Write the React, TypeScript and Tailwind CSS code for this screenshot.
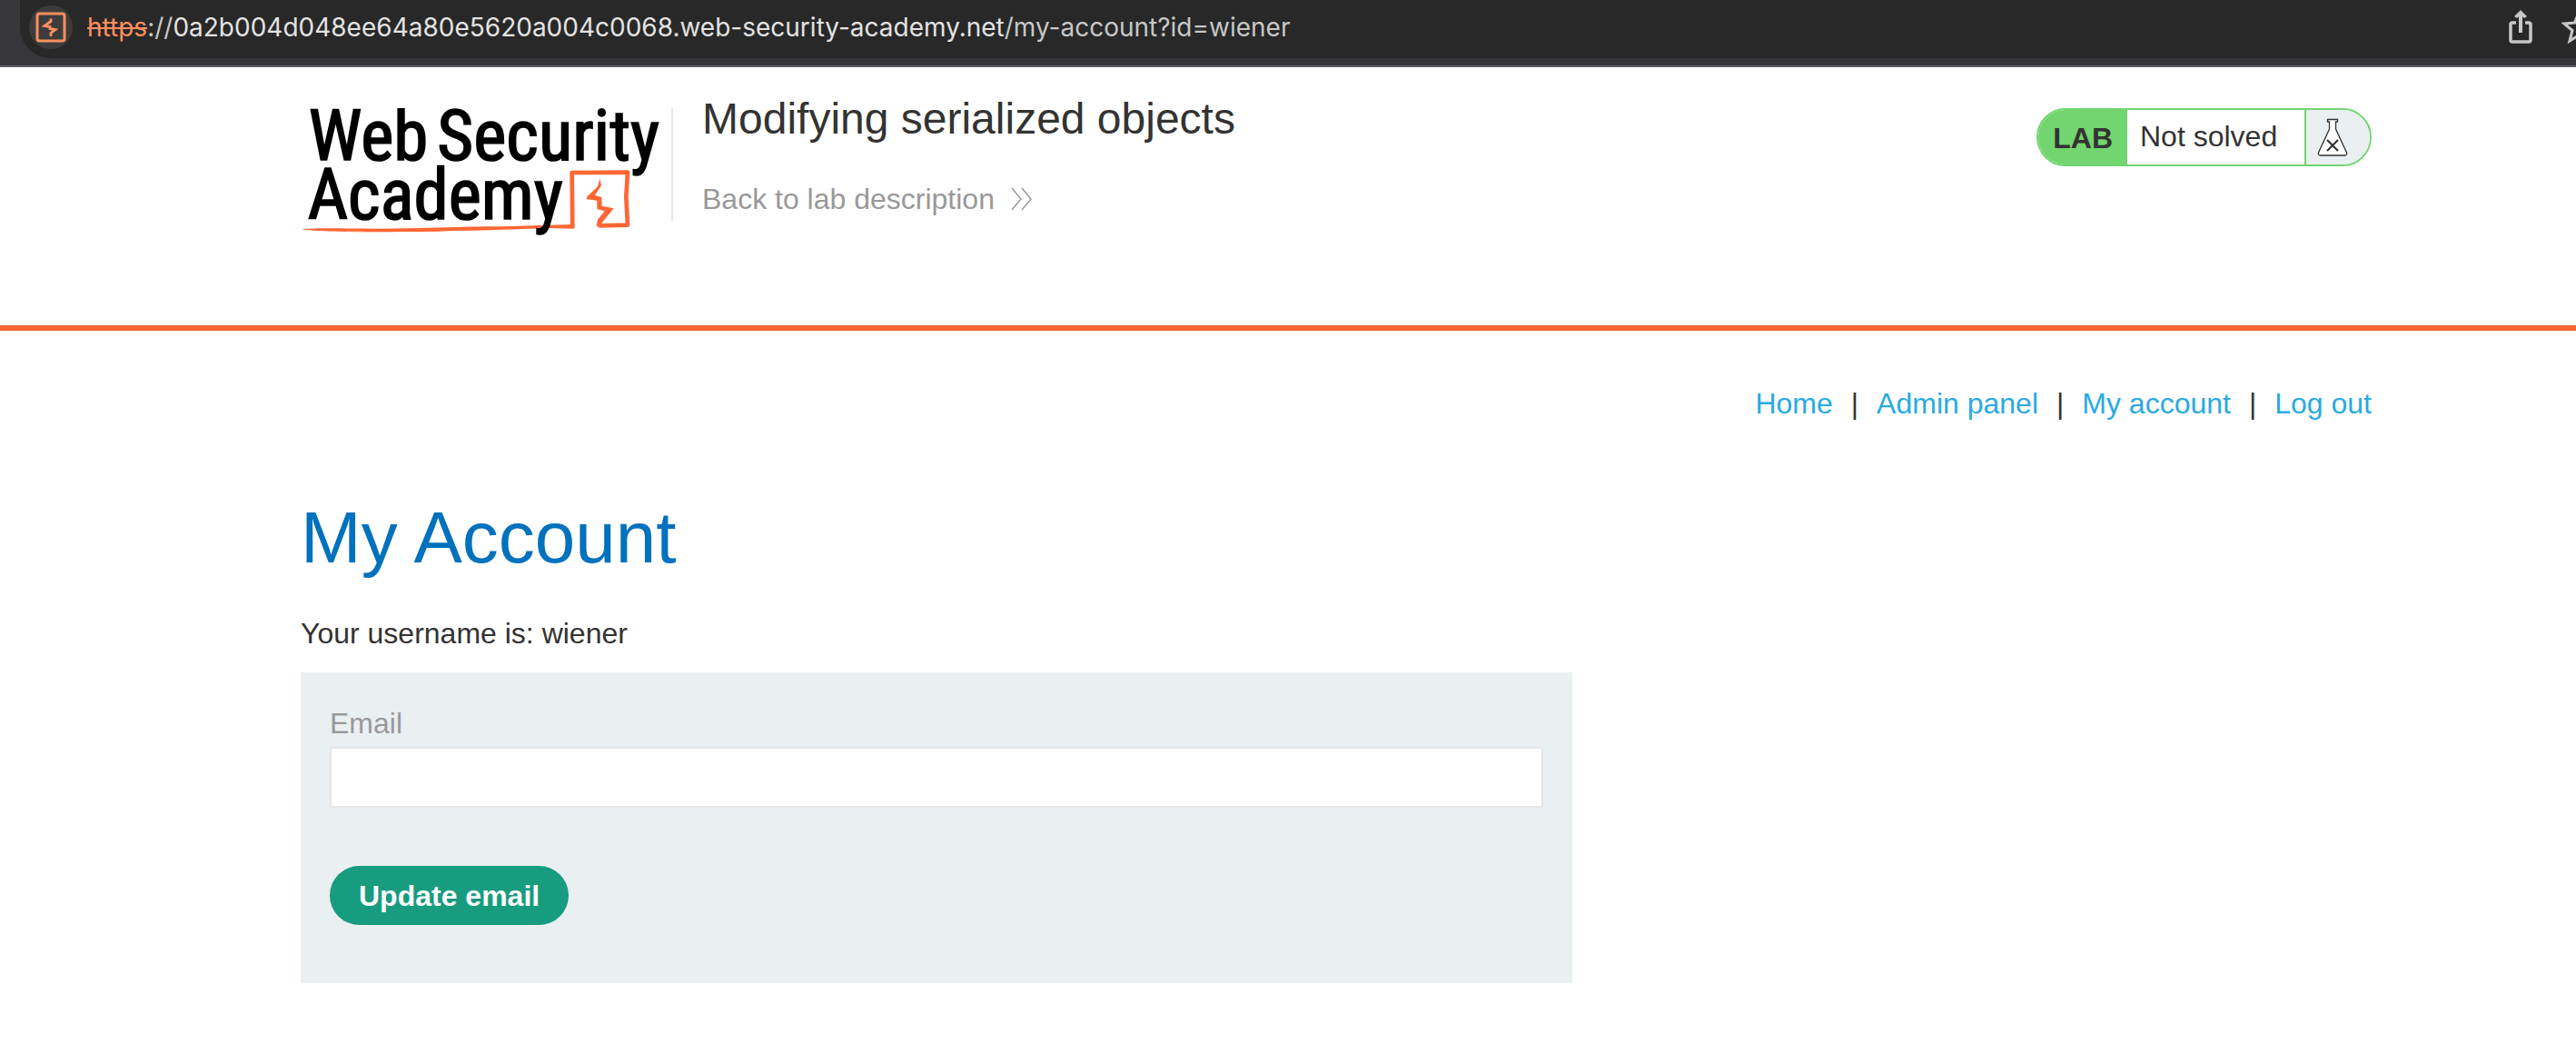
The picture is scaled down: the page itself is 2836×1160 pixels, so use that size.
import React from "react";

const NAV_LINKS = ["Home", "Admin panel", "My account", "Log out"];

function SiteIcon() {
  return (
    <svg viewBox="0 0 34 34" className="size-[34px]" fill="none" aria-hidden="true">
      <rect x="2" y="2" width="30" height="30" rx="2.500" stroke="#ff8f5f" strokeWidth="3" />
      <path d="M17 7.500 V10.500 L10 15.500 L16 16.500 V18.500 L22 19.500 L17 23.500 V27" stroke="#ff8f5f" strokeWidth="2.800" />
    </svg>
  );
}

function ShareIcon() {
  return (
    <svg viewBox="0 0 26 38" className="h-[38px] w-[26px]" fill="none" stroke="#c7c7c7" strokeWidth="3.500" aria-hidden="true">
      <path d="M8 14 H4 Q2 14 2 16 V33 Q2 35 4 35 H22 Q24 35 24 33 V16 Q24 14 22 14 H18" />
      <path d="M13 25 V4" strokeWidth="4" />
      <path d="M13 0 L20 7 L17 9 L13 5.500 L9 9 L6 7 Z" fill="#c7c7c7" stroke="none" />
    </svg>
  );
}

function StarIcon() {
  return (
    <svg viewBox="0 0 38 38" className="size-[38px]" fill="none" stroke="#c7c7c7" strokeWidth="3" aria-hidden="true">
      <path d="M19 3 L23.500 14 L35 15 L26 22.500 L29 34 L19 28 L9 34 L12 22.500 L3 15 L14.500 14 Z" />
    </svg>
  );
}

function AddressBar() {
  return (
    <div className="overflow-hidden border-b-2 border-[#616066] bg-[#37363b] pb-2 pl-[22px]">
      <div className="flex h-16 items-center rounded-bl-[34px] bg-[#282828] pb-1 pl-[10px]">
        <button type="button" aria-label="Site information" className="flex size-12 shrink-0 items-center justify-center rounded-full bg-[#3c3c3c]">
          <SiteIcon />
        </button>
        <p className="ml-4 grow whitespace-nowrap font-['Inter',sans-serif] text-[28px] leading-10 text-[#c7c7c7]">
          <span className="text-[#ff8f5f] line-through decoration-2">https</span>
          <span>://</span>
          <span className="text-[#e3e3e3]">0a2b004d048ee64a80e5620a004c0068.web-security-academy.net</span>
          <span>/my-account?id=wiener</span>
        </p>
        <div className="-mr-[22px] flex shrink-0 items-center gap-8">
          <button type="button" aria-label="Share">
            <ShareIcon />
          </button>
          <button type="button" aria-label="Bookmark this page">
            <StarIcon />
          </button>
        </div>
      </div>
    </div>
  );
}

function Logo() {
  return (
    <svg viewBox="33 57 1200 420" className="h-[140px] w-[400px] shrink-0" role="img" aria-label="Web Security Academy">
      <g fill="none" stroke="#ff6633" strokeWidth="14" strokeLinejoin="round">
        <path d="M36 457 C90 451 180 455 300 455 C500 452 600 447 700 448 L930 441 L937 455 L850 453 C700 460 600 460 490 464 C300 466 100 468 36 457 Z" fill="#ff6633" stroke="none" />
        <path d="M931 452 L929 270 L1113 269 L1108 350 L1113 443 L1018 445" />
        <path d="M1021 290 L1026 312 L1005 345 L1027 351 L1028 380 L1067 388 L1028 436 L1020 450 L1010 446 L1014 425 L1037 397 L1012 390 L1012 362 L978 358 L978 350 L1014 316 Z" fill="#ff6633" stroke="none" />
      </g>
      <g fontFamily="'Roboto Condensed', sans-serif" fontSize="231" fontWeight="400" fill="#000" stroke="#000" strokeWidth="5">
        <text x="59" y="229">Web</text>
        <text x="484" y="229">Security</text>
        <text x="56" y="424">Academy</text>
      </g>
    </svg>
  );
}

function DoubleChevron() {
  return (
    <svg viewBox="0 0 24 26" className="h-[26px] w-6" fill="none" stroke="#999" strokeWidth="1.500" aria-hidden="true">
      <path d="M1 1 L11 13 L1 25 M12 1 L22 13 L12 25" />
    </svg>
  );
}

function Flask() {
  return (
    <svg viewBox="0 0 34 42" className="h-[42px] w-[34px]" stroke="#333332" aria-hidden="true">
      <path d="M11.500 1.500 H22.500 V4 H20.500 V12 L32.500 38 Q33 41 30.500 41 H3.500 Q1 41 1.500 38 L13.500 12 V4 H11.500 Z" fill="#fff" strokeWidth="1.300" />
      <path d="M11 24 L23 36 M23 24 L11 36" strokeWidth="2.200" fill="none" />
    </svg>
  );
}

function LabStatus() {
  return (
    <div className="flex h-16 shrink-0 items-stretch overflow-hidden rounded-full border-2 border-[#72d56f] bg-white text-[32px] leading-[60px]">
      <strong className="bg-[#72d56f] pl-4 pr-4 leading-[62px]">LAB</strong>
      <p className="w-[195px] pl-[14px] leading-[58px]">Not solved</p>
      <span className="flex w-[72px] items-center border-l-2 border-[#72d56f] bg-[#eaeff2] pl-3">
        <Flask />
      </span>
    </div>
  );
}

export default function App() {
  return (
    <div className="font-['Liberation_Sans',Arial,sans-serif] text-[32px] leading-10 text-[#333332]">
      <AddressBar />

      <header className="border-b-[6px] border-[#ff6633]">
        <div className="ml-[331px] mr-[225px] flex h-[284px] items-start pt-[45px]">
          <a href="#academy">
            <Logo />
          </a>
          <div className="ml-2 h-[124px] w-0.5 shrink-0 bg-[#e5e5e5]" />
          <div className="-mt-4 ml-8 grow">
            <h2 className="text-[48px] leading-[56px]">Modifying serialized objects</h2>
            <a href="#lab" className="mt-10 flex items-center gap-[18px] text-[#999]">
              Back to lab description
              <DoubleChevron />
            </a>
          </div>
          <LabStatus />
        </div>
      </header>

      <main className="ml-[331px] mr-[225px]">
        <nav className="flex justify-end pt-[60px]">
          {NAV_LINKS.map((label, i) => (
            <React.Fragment key={label}>
              {i > 0 && <span className="mx-5">|</span>}
              <a href={"#" + label.toLowerCase().replace(" ", "-")} className="text-[#29aae1]">
                {label}
              </a>
            </React.Fragment>
          ))}
        </nav>

        <h1 className="mt-[82px] text-[80px] leading-[92px] text-[#0071bd]">My Account</h1>
        <p className="mt-[39px]">Your username is: wiener</p>

        <form className="mt-[23px] max-w-[1400px] bg-[#eaeff2] px-8 pb-16 pt-9" onSubmit={(e) => e.preventDefault()}>
          <label htmlFor="email" className="block text-[#999]">
            Email
          </label>
          <input
            id="email"
            type="email"
            className="mt-1.5 block h-[67px] w-full border-2 border-[#e5e5e5] bg-white px-4 outline-none"
          />
          <button type="submit" className="mt-16 block h-[65px] rounded-full bg-[#189c7f] px-8 font-bold text-white">
            Update email
          </button>
        </form>
      </main>
    </div>
  );
}
